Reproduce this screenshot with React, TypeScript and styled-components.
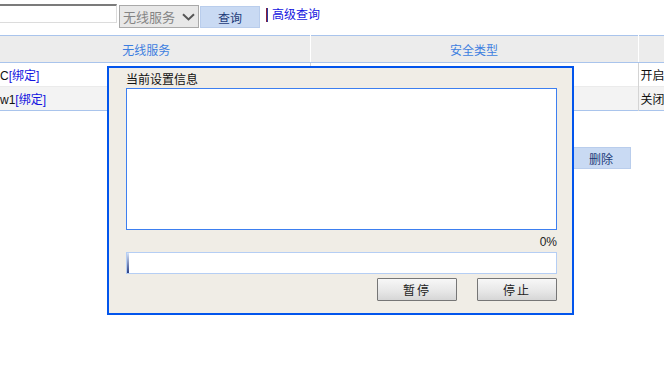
import React from 'react';
import styled, { createGlobalStyle } from 'styled-components';

const GlobalStyle = createGlobalStyle`
  html, body {
    margin: 0;
    padding: 0;
    background: #ffffff;
    overflow: hidden;
  }
  body {
    font-family: "Liberation Sans", "Noto Sans CJK SC", sans-serif;
    font-size: 12px;
    color: #000;
  }
`;

const Page = styled.div`
  position: relative;
  width: 664px;
  height: 382px;
  overflow: hidden;
`;

const SearchBar = styled.div`
  display: flex;
  align-items: flex-start;
  margin-left: -20px;
  padding-top: 4px;
  height: 31px;
  box-sizing: border-box;
`;

const TextInput = styled.div`
  width: 137px;
  height: 19px;
  box-sizing: border-box;
  background: #fff;
  border-top: 2px solid #7b7b7b;
  border-left: 2px solid #7b7b7b;
  border-right: 1px solid #dcdcdc;
  border-bottom: 1px solid #dcdcdc;
`;

const SelectBox = styled.div`
  margin-left: 2px;
  margin-top: 1px;
  width: 80px;
  height: 23px;
  box-sizing: border-box;
  background: #e8e8e8;
  border: 1px solid #a9a9a9;
  display: flex;
  align-items: center;
  justify-content: space-between;
  padding: 0 3px 0 3px;
  font-size: 13px;
  color: #858585;
`;

const QueryButton = styled.div<{ $ml?: number }>`
  margin-left: ${(p) => p.$ml ?? 1}px;
  margin-top: 2px;
  width: 60px;
  height: 22px;
  box-sizing: border-box;
  background: #c9daf3;
  border: 1px solid #b9cdec;
  color: #1d3a78;
  display: flex;
  align-items: center;
  justify-content: center;
  font-size: 12px;
`;

const Separator = styled.div`
  margin-left: 6px;
  margin-top: 4px;
  width: 2px;
  height: 14px;
  background: linear-gradient(90deg, #8a1f3a 50%, #2a3aa0 50%);
`;

const AdvancedLink = styled.a`
  margin-left: 4px;
  margin-top: 4px;
  line-height: 14px;
  color: #1414e0;
  text-decoration: none;
  font-size: 12px;
`;

const TableWrap = styled.div`
  margin-left: -17px;
  margin-top: 4px;
`;

const Table = styled.table`
  border-collapse: collapse;
  table-layout: fixed;
  width: 720px;
  border-top: 1px solid #a9c4ec;
  border-bottom: 1px solid #a9c4ec;
`;

const HeadCell = styled.th`
  height: 26px;
  padding: 0;
  background: #ececec;
  border-bottom: 1px solid #a9c4ec;
  border-right: 1px solid #ffffff;
  color: #3d7ee0;
  font-weight: normal;
  text-align: center;
  font-size: 12px;
`;

const Row = styled.tr<{ $alt?: boolean }>`
  background: ${(p) => (p.$alt ? '#f3f3f3' : '#ffffff')};
  border-top: ${(p) => (p.$alt ? '1px solid #ebebeb' : 'none')};
`;

const Cell = styled.td<{ $first?: boolean }>`
  height: 23px;
  padding: ${(p) => (p.$first ? '0 2px 0 17px' : '0 2px')};
  border-right: 1px solid #d4d4d4;
  white-space: nowrap;
  overflow: hidden;
  font-size: 12px;
  color: #111;
`;

const BindLink = styled.span`
  color: #1414e0;
`;

const ActionRow = styled.div`
  margin-top: 34px;
  margin-left: 571px;
  display: flex;
`;

const Dialog = styled.div`
  position: absolute;
  left: 107px;
  top: 66px;
  width: 467px;
  height: 249px;
  box-sizing: border-box;
  background: #f0ede6;
  border: 2px solid #0255ec;
  padding: 4px 15px 0 17px;
  display: flex;
  flex-direction: column;
`;

const DialogTitle = styled.div`
  height: 16px;
  line-height: 16px;
  font-size: 12px;
  color: #111;
`;

const InfoArea = styled.div`
  height: 142px;
  box-sizing: border-box;
  background: #fff;
  border: 1px solid #3d7ff0;
`;

const Percent = styled.div`
  height: 22px;
  line-height: 20px;
  padding-top: 2px;
  box-sizing: border-box;
  text-align: right;
  font-size: 12px;
  color: #222;
`;

const Progress = styled.div`
  height: 22px;
  box-sizing: border-box;
  background: #fff;
  border: 1px solid #b5cef4;
  display: flex;
`;

const ProgressFill = styled.div`
  height: 100%;
  background: linear-gradient(180deg, #d6e2f6 0%, #2a3f86 100%);
`;

const ButtonRow = styled.div`
  margin-top: 4px;
  display: flex;
  justify-content: flex-end;
  gap: 20px;
`;

const DialogButton = styled.button`
  width: 80px;
  height: 23px;
  box-sizing: border-box;
  padding: 0;
  border: 1px solid #767676;
  border-radius: 1px;
  background: linear-gradient(180deg, #f7f7f7 0%, #e6e6e6 60%, #d6d6d6 100%);
  font-family: "Liberation Sans", "Noto Sans CJK SC", sans-serif;
  font-size: 12px;
  letter-spacing: 2px;
  color: #222;
`;

const Chevron = () => (
  <svg width="13" height="8" viewBox="0 0 13 8">
    <path d="M1 1.2 L6.5 6.4 L12 1.2" fill="none" stroke="#555" strokeWidth="2" />
  </svg>
);

export default function App() {
  const progress = 0;
  return (
    <Page>
      <GlobalStyle />
      <SearchBar>
        <TextInput />
        <SelectBox>
          <span>无线服务</span>
          <Chevron />
        </SelectBox>
        <QueryButton>查询</QueryButton>
        <Separator />
        <AdvancedLink href="#">高级查询</AdvancedLink>
      </SearchBar>
      <TableWrap>
        <Table>
          <colgroup>
            <col style={{ width: 327 }} />
            <col style={{ width: 328 }} />
            <col />
          </colgroup>
          <thead>
            <tr>
              <HeadCell>无线服务</HeadCell>
              <HeadCell>安全类型</HeadCell>
              <HeadCell></HeadCell>
            </tr>
          </thead>
          <tbody>
            <Row>
              <Cell $first>
                C<BindLink>[绑定]</BindLink>
              </Cell>
              <Cell></Cell>
              <Cell>开启</Cell>
            </Row>
            <Row $alt>
              <Cell $first>
                w1<BindLink>[绑定]</BindLink>
              </Cell>
              <Cell></Cell>
              <Cell>关闭</Cell>
            </Row>
          </tbody>
        </Table>
      </TableWrap>
      <ActionRow>
        <QueryButton $ml={0}>删除</QueryButton>
      </ActionRow>
      <Dialog>
        <DialogTitle>当前设置信息</DialogTitle>
        <InfoArea />
        <Percent>{progress}%</Percent>
        <Progress>
          <ProgressFill style={{ width: Math.max(2, progress * 4.29) }} />
        </Progress>
        <ButtonRow>
          <DialogButton>暂停</DialogButton>
          <DialogButton>停止</DialogButton>
        </ButtonRow>
      </Dialog>
    </Page>
  );
}
